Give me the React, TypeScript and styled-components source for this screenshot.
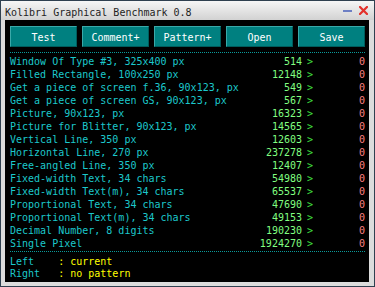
import React from 'react';
import styled, { createGlobalStyle } from 'styled-components';

const GlobalStyle = createGlobalStyle`
  html, body {
    margin: 0;
    padding: 0;
    background: #dcdcdc;
  }
`;

const Window = styled.div`
  width: 375px;
  height: 287px;
  box-sizing: border-box;
  border: 1px solid #2f4050;
  background: #dcdcdc;
  display: flex;
  flex-direction: column;
  font-family: "DejaVu Sans Mono", "Liberation Mono", monospace;
  font-size: 10px;
`;

const TitleBar = styled.div`
  height: 19px;
  flex: 0 0 19px;
  display: flex;
  align-items: center;
  padding: 0 6px 0 4px;
  background: linear-gradient(to bottom, #f6f6f6, #d2d2d2);
  color: #1e1e1e;
  font-size: 10px;
`;

const Title = styled.span`
  flex: 1;
  padding-top: 3px;
`;

const TitleIcons = styled.div`
  display: flex;
  align-items: center;
  gap: 7px;
`;

const Content = styled.div`
  flex: 1;
  margin: 0 5px 4px 4px;
  background: #000;
  padding: 6px 4px 0 5px;
  display: flex;
  flex-direction: column;
`;

const Toolbar = styled.div`
  display: flex;
  gap: 5px;
`;

const Button = styled.div`
  width: 67px;
  height: 21px;
  box-sizing: border-box;
  background: #008080;
  border-top: 1px solid #3aa9a9;
  border-left: 1px solid #3aa9a9;
  border-bottom: 1px solid #005c5c;
  border-right: 1px solid #005c5c;
  color: #ffffff;
  display: flex;
  align-items: center;
  justify-content: center;
  padding-top: 1px;
`;

const Dots = styled.div<{ $top: number; $bottom: number }>`
  height: 1px;
  margin: ${(p) => p.$top}px 0 ${(p) => p.$bottom}px 0;
  background: linear-gradient(to right, #0a9a9a 50%, transparent 50%);
  background-size: 2px 1px;
`;

const Row = styled.div`
  display: flex;
  height: 13px;
  line-height: 13px;
  white-space: pre;
`;

const Label = styled.span`
  flex: 1;
  color: #1cc8cc;
`;

const Value = styled.span`
  width: 60px;
  text-align: right;
  color: #80ff80;
`;

const Arrow = styled.span`
  margin-left: 5px;
  width: 6px;
  color: #40e040;
`;

const Result = styled.span`
  width: 52px;
  text-align: right;
  color: #ff8080;
`;

const FooterRow = styled.div`
  height: 12px;
  line-height: 12px;
  white-space: pre;
`;

const Key = styled.span`
  color: #1cc8cc;
`;

const Info = styled.span`
  color: #ffff00;
`;

const buttons = ['Test', 'Comment+', 'Pattern+', 'Open', 'Save'];

const results: [string, number][] = [
  ['Window Of Type #3, 325x400 px', 514],
  ['Filled Rectangle, 100x250 px', 12148],
  ['Get a piece of screen f.36, 90x123, px', 549],
  ['Get a piece of screen GS, 90x123, px', 567],
  ['Picture, 90x123, px', 16323],
  ['Picture for Blitter, 90x123, px', 14565],
  ['Vertical Line, 350 px', 12603],
  ['Horizontal Line, 270 px', 237278],
  ['Free-angled Line, 350 px', 12407],
  ['Fixed-width Text, 34 chars', 54980],
  ['Fixed-width Text(m), 34 chars', 65537],
  ['Proportional Text, 34 chars', 47690],
  ['Proportional Text(m), 34 chars', 49153],
  ['Decimal Number, 8 digits', 190230],
  ['Single Pixel', 1924270],
];

function App() {
  return (
    <>
      <GlobalStyle />
      <Window>
        <TitleBar>
          <Title>Kolibri Graphical Benchmark 0.8</Title>
          <TitleIcons>
            <svg width="9" height="4" viewBox="0 0 9 4">
              <rect x="0" y="1" width="9" height="2" fill="#6d7fc4" />
            </svg>
            <svg width="9" height="9" viewBox="0 0 9 9">
              <path d="M1 1 L8 8 M8 1 L1 8" stroke="#e3302a" strokeWidth="2.2" strokeLinecap="square" />
            </svg>
          </TitleIcons>
        </TitleBar>
        <Content>
          <Toolbar>
            {buttons.map((b) => (
              <Button key={b}>{b}</Button>
            ))}
          </Toolbar>
          <Dots $top={5} $bottom={2} />
          {results.map(([name, v]) => (
            <Row key={name}>
              <Label>{name}</Label>
              <Value>{v}</Value>
              <Arrow>&gt;</Arrow>
              <Result>0</Result>
            </Row>
          ))}
          <Dots $top={1} $bottom={4} />
          <FooterRow>
            <Key>{'Left    '}</Key>
            <Info>: current</Info>
          </FooterRow>
          <FooterRow>
            <Key>{'Right   '}</Key>
            <Info>: no pattern</Info>
          </FooterRow>
        </Content>
      </Window>
    </>
  );
}

export default App;
